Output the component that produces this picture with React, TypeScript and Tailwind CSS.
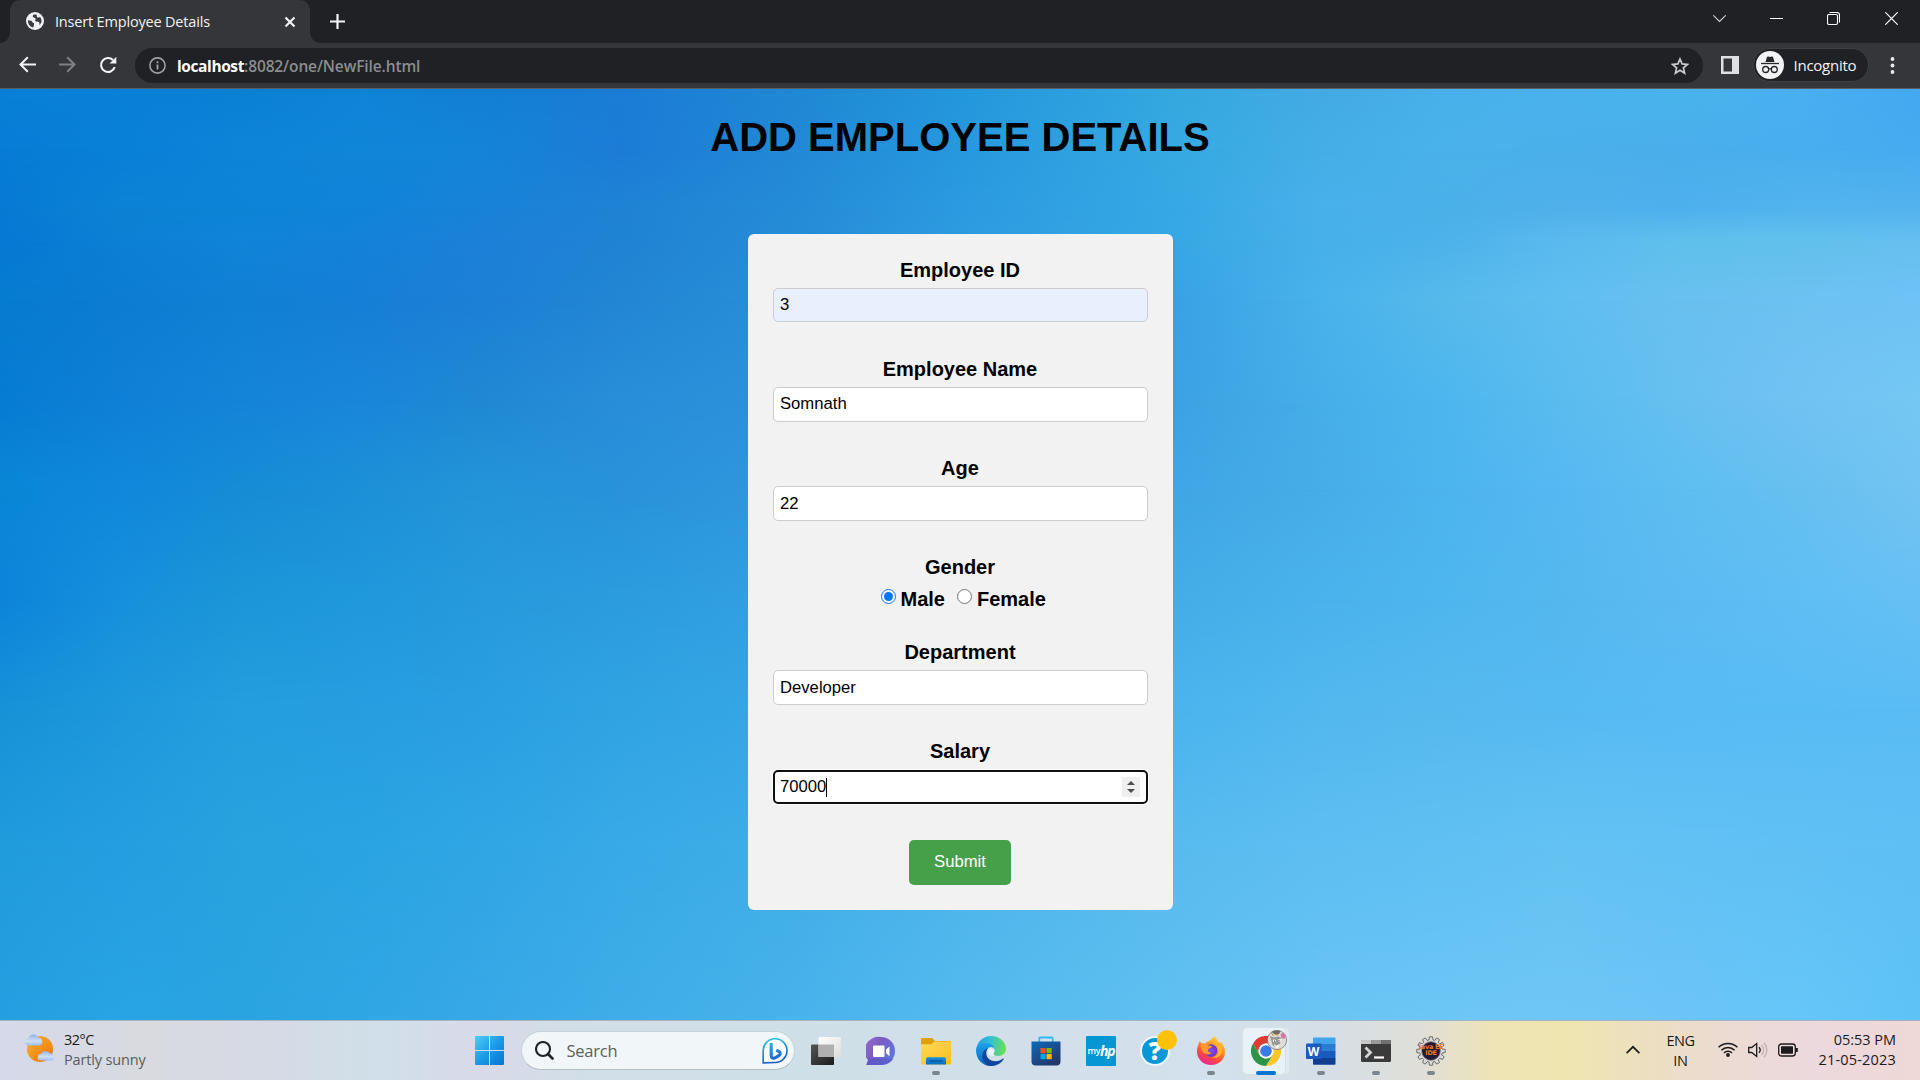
import React from "react";

const UI = "font-['Open_Sans','Noto_Sans',sans-serif]";

const stops = [0, 120, 240, 360, 480, 620, 800, 960, 1173, 1320, 1440, 1560, 1680, 1800, 1920];
const mesh: { y: number; c: string[] }[] = [
  { y: 0, c: ["#0880d8", "#0a80d8", "#0a80d4", "#0f84d8", "#127fd4", "#1b7dd6", "#1f88d4", "#2397dc", "#34a8e0", "#43aae4", "#48b0ea", "#4ab2ee", "#48b4ec", "#4ab0f2", "#44a8f0"] },
  { y: 60, c: ["#077cd6", "#0880d8", "#0e84d8", "#1086d8", "#1484d8", "#1c7cd6", "#2289d7", "#2798de", "#36a9e2", "#44aee6", "#4ab2ea", "#4ab0ea", "#4aaeec", "#48aeee", "#46acf0"] },
  { y: 120, c: ["#067ad4", "#0c82d4", "#0c84d6", "#1084d8", "#1882d8", "#1f83d4", "#248cd8", "#2c9ae0", "#36a8e4", "#48b0ec", "#4ab0e8", "#50b0ea", "#4eb0ee", "#52b4ee", "#54b2ee"] },
  { y: 152, c: ["#0579d4", "#0c80d4", "#1084d8", "#1482d8", "#1c80d8", "#2083d4", "#268dd8", "#2e9ce0", "#37a8e4", "#46b0ea", "#4cb2ea", "#5abaee", "#60c0ec", "#62c0ec", "#66c0f0"] },
  { y: 210, c: ["#067cd0", "#0c7cd2", "#1080d4", "#167ed6", "#1c80d6", "#2286d4", "#2890da", "#309fe2", "#38a2e4", "#48b2ec", "#56baea", "#60bef0", "#68c0f0", "#6cc2f2", "#6ec2f6"] },
  { y: 310, c: ["#067cd2", "#0f80d6", "#1484d8", "#1a86da", "#1f88d4", "#288eda", "#2c92da", "#309ae0", "#3ca2e2", "#46aeea", "#4cb6ee", "#5abcee", "#66c0f0", "#72c2f4", "#74c8f2"] },
  { y: 400, c: ["#0a86d6", "#1088dc", "#168cd6", "#1c90d8", "#2494d8", "#2892da", "#3098de", "#36a0e2", "#40a6e6", "#46ade8", "#4cb4ee", "#56b8f2", "#5ebef0", "#66c0f0", "#72c4f2"] },
  { y: 510, c: ["#0c84da", "#1690dc", "#1c96d8", "#2098dc", "#269adc", "#2c9cde", "#34a0e2", "#3ca6e6", "#43ade8", "#4ab2ec", "#4eb6ee", "#54b8ee", "#5cbaf2", "#60bef4", "#66c0f4"] },
  { y: 620, c: ["#1692d8", "#1e98dc", "#249ede", "#269ee0", "#2a9fe2", "#30a4e2", "#38a6e6", "#40acea", "#4ab4ee", "#52b8ee", "#56b9ee", "#56baf2", "#58bbf4", "#58bcf4", "#5abcf4"] },
  { y: 760, c: ["#209cdc", "#249ee0", "#28a3de", "#2aa4e2", "#30a6e4", "#38aae6", "#40aee8", "#4cb4ea", "#58bbee", "#5ebef2", "#60c0f2", "#64c2f2", "#62c1f4", "#60c0f4", "#5ebff4"] },
  { y: 932, c: ["#259ee0", "#28a4e4", "#2aa4e0", "#30a6e4", "#38a8e6", "#3fade8", "#48b2ec", "#54baee", "#60c0f0", "#6ac4f4", "#6cc6f6", "#6ec6f6", "#6cc4f6", "#66c6f8", "#5ec2f6"] },
];

function Wallpaper() {
  return (
    <div className="absolute inset-0 overflow-hidden">
      {mesh.map((row, i) => {
        const mask =
          i === 0 ? undefined : `linear-gradient(to bottom, transparent ${mesh[i - 1].y}px, black ${row.y}px)`;
        return (
          <div
            key={row.y}
            className="absolute inset-0"
            style={{
              backgroundImage: `linear-gradient(to right, ${row.c.map((c, k) => `${c} ${stops[k]}px`).join(", ")})`,
              maskImage: mask,
            }}
          />
        );
      })}
    </div>
  );
}

function TabStrip() {
  return (
    <div className="flex h-[43px] bg-[#202124]">
      <div className="relative ml-[10px] flex h-[43px] w-[300px] items-center rounded-t-[10px] bg-[#35363a]">
        <span className="absolute bottom-0 -left-[10px] h-[10px] w-[10px] bg-[radial-gradient(circle_at_0_0,#202124_9.5px,#35363a_10px)]" />
        <span className="absolute -right-[10px] bottom-0 h-[10px] w-[10px] bg-[radial-gradient(circle_at_100%_0,#202124_9.5px,#35363a_10px)]" />
        <svg className="mt-[-1px] ml-4 h-[18px] w-[18px]" viewBox="0 0 18 18">
          <circle cx="9" cy="9" r="9" fill="#eff1f3" />
          <path d="M2 8.200c1.200 0 2.500.2 3.600.9.800.5.500 1.500 1.500 1.700.9.200 1.200.8.900 1.700L7.300 15.600C4.200 15 2 12.300 2 9zM8 2.500c-1 .8-1.800 1.600-.9 2.600.8.900 2.100.4 2.500 1.600.3 1-.9 1.500-.3 2.400.7 1 2.700.3 3.700 1.200.8.700.4 1.700.3 2.600 1.200-1 2.200-2.400 2.200-4 0-1.500-.6-3-1.600-4.200-.4.800-1.100 1.100-2 .8-1.200-.5-1.400-1.500-1-2.600-1-.5-2-.6-2.900-.4z" fill="#3a3b40" />
        </svg>
        <span className={`${UI} ml-[11px] w-[216px] text-[14.5px] leading-5 tracking-[-0.18px] whitespace-nowrap text-[#f1f3f4]`}>
          Insert Employee Details
        </span>
        <svg className="ml-[13px] h-3 w-3" viewBox="0 0 12 12" stroke="#f1f3f4" strokeWidth="2.200">
          <path d="M1.500 1.500l9 9M10.500 1.500l-9 9" />
        </svg>
      </div>
      <svg className="mt-[14px] ml-[20px] h-[15px] w-[15px]" viewBox="0 0 15 15" stroke="#f1f3f4" strokeWidth="2.200">
        <path d="M7.500 0v15M0 7.500h15" />
      </svg>
      <div className="mt-[12px] ml-auto flex h-[13px] items-center">
        <svg className="mr-[44px] h-[13px] w-[13px]" viewBox="0 0 13 13" fill="none" stroke="#d5d6d8" strokeWidth="1.100">
          <path d="M.3 3.300l6.200 6.200 6.200-6.200" />
        </svg>
        <svg className="mr-[44px] h-[13px] w-[13px]" viewBox="0 0 13 13" stroke="#fff" strokeWidth="1">
          <path d="M0 6.500h13" />
        </svg>
        <svg className="mr-[45px] h-[13px] w-[13px]" viewBox="0 0 13 13" fill="none" stroke="#fff" strokeWidth="1.100">
          <rect x=".5" y="2.500" width="10" height="10" rx="1.500" />
          <path d="M2.500.5h7.500a2.500 2.500 0 0 1 2.500 2.500v7.500" />
        </svg>
        <svg className="mr-[22px] h-[13px] w-[13px]" viewBox="0 0 13 13" stroke="#fff" strokeWidth="1.200">
          <path d="M.3.3l12.400 12.400M12.700.3L.3 12.700" />
        </svg>
      </div>
    </div>
  );
}

function Toolbar() {
  return (
    <div className="flex h-[46px] border-b border-[#5b5d61] bg-[#35363a]">
      <svg className="mt-[13px] ml-[19px] h-[17px] w-[17px]" viewBox="0 0 17 17" fill="none" stroke="#f1f3f4" strokeWidth="2">
        <path d="M17 8.500H2M8.800 1.200L1.500 8.500l7.300 7.300" />
      </svg>
      <svg className="mt-[13px] ml-[23px] h-[17px] w-[17px]" viewBox="0 0 17 17" fill="none" stroke="#7e8084" strokeWidth="2">
        <path d="M0 8.500h15M8.200 1.200l7.300 7.300-7.300 7.300" />
      </svg>
      <svg className="mt-[13px] ml-[23px] h-[18px] w-[18px]" viewBox="0 0 18 18" fill="none" stroke="#f1f3f4" strokeWidth="2.100">
        <path d="M15.700 11.200A7 7 0 1 1 14 4" />
        <path d="M17.300.8v6.700h-6.700z" fill="#f1f3f4" stroke="none" />
      </svg>
      <div className="mt-[5px] ml-[18px] flex h-[35px] w-[1568px] items-center rounded-full bg-[#202124]">
        <svg className="ml-[14px] h-[17px] w-[17px]" viewBox="0 0 17 17" fill="none" stroke="#9aa0a6">
          <circle cx="8.500" cy="8.500" r="7.600" strokeWidth="1.600" />
          <path d="M8.500 7.500v5M8.500 4.200v2" strokeWidth="1.900" />
        </svg>
        <span className={`${UI} ml-[11px] mt-px text-[15.500px] leading-6 font-semibold tracking-[-0.12px] whitespace-nowrap text-[#8b8d90]`}>
          <span className="font-bold tracking-[-0.4px] text-white">localhost</span>:8082/one/NewFile.html
        </span>
        <svg className="mr-[14px] ml-auto h-[18px] w-[18px]" viewBox="0 0 18 18" fill="none" stroke="#c9cbce" strokeWidth="1.700">
          <path d="M9 2l2.100 4.900 5.300.5-4 3.500 1.200 5.200L9 13.300l-4.600 2.800 1.200-5.200-4-3.500 5.300-.5z" />
        </svg>
      </div>
      <svg className="mt-[13px] ml-[18px] h-[18px] w-[18px]" viewBox="0 0 18 18">
        <path d="M0 0h18v18H0zM2.500 2.500v13H11v-13z" fill="#dfe0e4" fillRule="evenodd" />
      </svg>
      <div className="mt-[5px] ml-[14px] flex h-[34px] w-[116px] items-center rounded-full border border-[#3e3f43] bg-[#202124]">
        <svg className="ml-[2px] h-7 w-7 shrink-0" viewBox="0 0 28 28">
          <circle cx="14" cy="14" r="14" fill="#f1f3f4" />
          <path d="M9.500 11l1.300-4.600c.2-.7.800-1 1.500-.8.600.2 1.100.3 1.700.3s1.100-.1 1.700-.3c.7-.2 1.300.1 1.500.8L18.500 11z" fill="#27282c" />
          <path d="M5 12.500h18" stroke="#27282c" strokeWidth="1.300" />
          <g fill="none" stroke="#27282c" strokeWidth="1.300">
            <circle cx="9.700" cy="18.500" r="3" />
            <circle cx="18.300" cy="18.500" r="3" />
            <path d="M12.700 18c.8-.5 1.800-.5 2.600 0" />
          </g>
        </svg>
        <span className={`${UI} ml-[9.500px] text-[15px] leading-5 tracking-[-0.25px] text-[#f1f3f4]`}>Incognito</span>
      </div>
      <svg className="mt-[14px] ml-[21px] h-[17px] w-[5px]" viewBox="0 0 5 17" fill="#e8eaed">
        <circle cx="2.500" cy="2" r="1.900" />
        <circle cx="2.500" cy="8.500" r="1.900" />
        <circle cx="2.500" cy="15" r="1.900" />
      </svg>
    </div>
  );
}

function Field({ label, value, box }: { label: string; value: string; box: string }) {
  return (
    <div className="mb-[1px] h-[98px]">
      <div className="mb-[6px] text-center text-[20px] leading-6 font-bold">{label}</div>
      <div className={`rounded-[5px] border border-[#ccc] pl-[6.500px] text-[16.667px] ${box}`}>{value}</div>
    </div>
  );
}

function EmployeeForm() {
  return (
    <div className="relative mx-auto mt-[72px] h-[676px] w-[425px] rounded-[6px] bg-[#f2f2f2] px-[25px] pt-6 text-black">
      <Field label="Employee ID" value="3" box="h-[34px] bg-[#e8f0fe] leading-[31px]" />
      <Field label="Employee Name" value="Somnath" box="h-[35px] bg-white leading-[31px]" />
      <Field label="Age" value="22" box="h-[35px] bg-white leading-[33px]" />
      <div className="mb-[29px]">
        <div className="mb-2 text-center text-[20px] leading-6 font-bold">Gender</div>
        <div className="flex pl-[108px] text-[20px] leading-6 font-bold">
          <span className="mt-[2px] flex h-[15px] w-[15px] items-center justify-center rounded-full border-[1.500px] border-[#0075ff] bg-white">
            <span className="h-[9px] w-[9px] rounded-full bg-[#0075ff]" />
          </span>
          <span className="ml-[5px] w-[43px]">Male</span>
          <span className="mt-[2px] ml-[13px] h-[15px] w-[15px] rounded-full border border-[#767676] bg-white" />
          <span className="ml-[5.500px]">Female</span>
        </div>
      </div>
      <Field label="Department" value="Developer" box="h-[35px] bg-white leading-[33px]" />
      <div>
        <div className="mb-[7px] text-center text-[20px] leading-6 font-bold">Salary</div>
        <div className="flex h-[34px] items-center rounded-[5px] border-2 border-[#101010] bg-white pr-[6px] pl-[5.500px] text-[16.667px] leading-[28px] shadow-[0_0_0_1px_#fff]">
          <span>70000</span>
          <span className="h-[19px] w-px bg-black" />
          <span className="ml-auto flex h-[20px] w-[18px] flex-col items-center justify-center gap-[4px] bg-[#efefef]">
            <svg className="h-1 w-2" viewBox="0 0 8 4" fill="#4d4d4d"><path d="M0 4l4-4 4 4z" /></svg>
            <svg className="h-1 w-2" viewBox="0 0 8 4" fill="#4d4d4d"><path d="M0 0l4 4 4-4z" /></svg>
          </span>
        </div>
      </div>
      <button className="mx-auto mt-9 block h-[45px] w-[102px] rounded-[5px] bg-[#45a049] pb-[2px] text-[16.667px] text-white">
        Submit
      </button>
    </div>
  );
}

function Slot({ children, running }: { children: React.ReactNode; running?: boolean }) {
  return (
    <div className="relative flex h-[59px] w-[55px] items-center justify-center">
      {children}
      {running && <span className="absolute bottom-[5px] left-[23.500px] h-1 w-2 rounded-full bg-[#7b868d]" />}
    </div>
  );
}

function TaskView() {
  return (
    <svg className="h-[30px] w-[30px]" viewBox="0 0 30 30">
      <defs>
        <linearGradient id="tvDark" x1="0" y1="0" x2="1" y2="1"><stop stopColor="#555" /><stop offset="1" stopColor="#1c1c1c" /></linearGradient>
        <linearGradient id="tvLight" x1="0" y1="0" x2="1" y2="1"><stop stopColor="#fff" /><stop offset="1" stopColor="#dcdcdc" /></linearGradient>
      </defs>
      <rect x="0" y="8.500" width="23" height="20.500" rx="1" fill="url(#tvDark)" />
      <rect x="7.500" y="1" width="22.500" height="20" rx="1" fill="url(#tvLight)" />
      <path d="M7.500 8.500H23V21H7.500z" fill="#b0b0b0" />
    </svg>
  );
}

function Chat() {
  return (
    <svg className="h-[30px] w-[30px]" viewBox="0 0 30 30">
      <defs>
        <linearGradient id="chat" x1="0" y1="0" x2="1" y2=".6"><stop stopColor="#9a6acb" /><stop offset=".5" stopColor="#7a5cc4" /><stop offset="1" stopColor="#5a78dc" /></linearGradient>
      </defs>
      <path d="M15 1a14 14 0 1 1 0 28H.8c-.5 0-.6-.4-.3-.8l1.700-4A14 14 0 0 1 15 1z" fill="url(#chat)" />
      <path d="M2.500 22.500h25C25 27 20 29 15 29H.8l-.3-.8z" fill="#5654c8" opacity=".6" />
      <rect x="7" y="9.500" width="11.500" height="11.500" rx="1.200" fill="#fff" />
      <path d="M20 13.500l3.500-3v9.700l-3.500-3z" fill="#fff" />
    </svg>
  );
}

function Folder() {
  return (
    <svg className="h-[30px] w-[30px]" viewBox="0 0 30 30">
      <defs>
        <linearGradient id="fold" x1="0" y1="0" x2="1" y2="1"><stop stopColor="#ffdc5e" /><stop offset="1" stopColor="#fcba1c" /></linearGradient>
        <linearGradient id="foldB" x1="0" y1="0" x2="0" y2="1"><stop stopColor="#1490df" /><stop offset="1" stopColor="#0b6ec0" /></linearGradient>
      </defs>
      <path d="M0 3.500C0 2.700.5 2 1.300 2h9.200c.6 0 1 .2 1.400.7L14 5h14.700c.8 0 1.300.5 1.300 1.200V10H0z" fill="#e09f0c" />
      <path d="M0 8.200h10.500L13.500 5.500H30v22.200c0 .5-.4.800-.8.800H.8c-.4 0-.8-.3-.8-.8z" fill="url(#fold)" />
      <path d="M5 28.500v-5.200c0-1.200.8-2 2-2h16c1.200 0 2 .8 2 2v5.200z" fill="url(#foldB)" />
      <path d="M8.500 25h13" stroke="#0b4f94" strokeWidth="1.300" />
    </svg>
  );
}

function Edge() {
  return (
    <svg className="h-[30px] w-[30px]" viewBox="0 0 30 30">
      <defs>
        <linearGradient id="edgeTop" x1="0" y1=".4" x2="1" y2=".5"><stop stopColor="#1b9de2" /><stop offset=".45" stopColor="#34bfd8" /><stop offset="1" stopColor="#6be24a" /></linearGradient>
        <linearGradient id="edgeMid" x1="0" y1="0" x2="0" y2="1"><stop stopColor="#1ca2ea" /><stop offset="1" stopColor="#0c62bc" /></linearGradient>
      </defs>
      <path d="M.3 13C1.300 5.500 7.500 0 15 0c8.500 0 15 6 15 12.800 0 4.500-3.500 7.200-7.600 7.200-3.300 0-5.200-1-5.200-2.200 0-.8 1.300-1.400 1.300-3.600 0-2.600-2.600-5.600-7.500-5.600-5 0-9 2.200-10.700 4.400z" fill="url(#edgeTop)" />
      <path d="M0 14.500c0-4.200 4.500-7.400 9.800-7.400 5.500 0 8.700 3.600 8.700 7 0-1.600-1.600-3-3.500-3-3 0-5.300 3.200-5.300 6.800 0 5.800 4.600 10.300 10.400 10.300-1.600 1.200-3.500 1.800-5.600 1.800C6.500 30 0 23 0 14.500z" fill="url(#edgeMid)" />
      <path d="M12.200 12c-1.500 1.500-1.900 3.400-1.900 5 0 5.700 4.800 8.200 9 8.200 3.500 0 5.800-1.400 7.500-2.500.8-.5 1.200 0 .9.500A15 15 0 0 1 14.800 30c-5.600-1-8.600-5.400-8.600-10 0-3.600 2.400-7 6-8z" fill="#10479a" />
      <path d="M13.500 12.600c2-.6 4.500.2 5 2 .3 1.600-1 2.500-1 3.500 0 .7.500 1.200 1.300 1.600-3.500 1-6.800-1-6.800-4 0-1.200.5-2.500 1.500-3.100z" fill="#eaf4fa" opacity=".9" />
    </svg>
  );
}

function Store() {
  return (
    <svg className="h-[30px] w-[30px]" viewBox="0 0 30 30">
      <defs>
        <linearGradient id="store" x1="0" y1="0" x2=".7" y2="1"><stop stopColor="#0e69b8" /><stop offset="1" stopColor="#24366a" /></linearGradient>
      </defs>
      <path d="M8.300 7V2.500c0-.6.400-1 1-1h11.400c.6 0 1 .4 1 1V7" fill="none" stroke="#29bdf2" strokeWidth="1.800" />
      <path d="M.5 5.500h29v20c0 2.500-1.500 4-4 4h-21c-2.500 0-4-1.500-4-4z" fill="url(#store)" />
      <path d="M9.500 12h5.200v5.200H9.500z" fill="#f25022" />
      <path d="M15.500 12h5.200v5.200h-5.200z" fill="#7fba00" />
      <path d="M9.500 18h5.200v5.200H9.500z" fill="#00a4ef" />
      <path d="M15.500 18h5.200v5.200h-5.200z" fill="#ffb900" />
    </svg>
  );
}

function Help() {
  return (
    <div className="relative h-[30px] w-[30px]">
      <div className="-ml-px flex h-[30px] w-[30px] items-center justify-center rounded-full border-2 border-[#eef7fb] bg-[#0a97d8] font-['Open_Sans',sans-serif] text-[25px] leading-none font-extrabold text-white">
        ?
      </div>
      <span className="absolute -top-[6px] left-[16px] h-5 w-5 rounded-full bg-[#ffc20a]" />
    </div>
  );
}

function Firefox() {
  return (
    <svg className="h-[30px] w-[30px]" viewBox="0 0 30 30">
      <defs>
        <linearGradient id="ff" x1=".8" y1="0" x2=".3" y2="1"><stop stopColor="#ffe23c" /><stop offset=".35" stopColor="#ff9a26" /><stop offset=".7" stopColor="#ff4a42" /><stop offset="1" stopColor="#e8249c" /></linearGradient>
        <radialGradient id="ffP"><stop stopColor="#8a4cf0" /><stop offset="1" stopColor="#6a35c4" /></radialGradient>
      </defs>
      <path d="M18.500 0c1.500 1.500 2 4 4.500 6l1.300 1.300c.2-.8.200-1.300.2-1.800 3.200 3 4.500 7 4.500 10.500C29 23.500 23 29 15.200 29 7 29 1 23 1 15.500c0-3 .6-5.300 1.500-7 .2-1.500.8-2.500 1.600-3.200.2 1 .7 1.700 1.300 2.200 1.500-.3 2.600-.1 3.600.3 1-1.500 2.500-2.500 4-2.800 1.500-.3 2-2 5.500-5z" fill="url(#ff)" />
      <circle cx="15" cy="14.500" r="6.300" fill="url(#ffP)" />
      <path d="M4.500 9c3-1.500 6-1 7.800.6 1.500.1 3.300.3 3.600.9-.6 1.700-2.900 1.700-3.700 2.800-.6 1 .2 3.300 3.200 3.600-2 2.100-5.200 2-7 .2C5.500 15.500 5 12 4.500 9z" fill="#ff9a2c" />
      <path d="M16 7c3.500.5 6.500 3.500 6.500 7.500s-3 6.800-7 6.800c4 1.700 9.500-.8 10.300-5.800.5-4-1.300-7-4-9.500-1.500-1-3-1-5.800 1z" fill="#ffb52e" />
    </svg>
  );
}

function Chrome() {
  return (
    <div className="relative flex h-12 w-12 justify-start">
      <div className="h-12 w-12 rounded-[5px] border border-[#d5e0e6] bg-[#dfeaf0]" />
      <div className="absolute top-0 left-0 h-12 w-[44px] rounded-[5px] border border-[#d5e0e7] bg-[#e9f2f7]" />
      <svg className="absolute top-[9px] left-[9px] h-[30px] w-[30px]" viewBox="0 0 30 30">
        <circle cx="15" cy="15" r="15" fill="#fff" />
        <path d="M2 7.500A15 15 0 0 1 28 7.500H15A7.500 7.500 0 0 0 8.500 18.700z" fill="#df3b32" />
        <path d="M28 7.500A15 15 0 0 1 15 30l6.500-11.200A7.500 7.500 0 0 0 15 7.500z" fill="#fcc52a" />
        <path d="M2 7.500A15 15 0 0 0 15 30l6.500-11.200a7.500 7.500 0 0 1-13 0z" fill="#2d9347" />
        <circle cx="15" cy="15" r="7.500" fill="#fff" />
        <circle cx="15" cy="15" r="5.800" fill="#397ce6" />
      </svg>
      <svg className="absolute top-[3px] left-[25px] h-5 w-5" viewBox="0 0 20 20">
        <circle cx="10" cy="10" r="9.600" fill="#e0ddd9" stroke="#777" strokeWidth=".8" />
        <path d="M4.500 1.800l3.500 3 4-.5 1.500-3-1-.8H8z" fill="#6f6b66" />
        <path d="M3 6l4 1.500 3-1 4 1-1 6-3.500 4.500-4-3z" fill="#989898" />
        <path d="M6 9.500l3 .5-1 2.500-2-1zM11 9.500l3-.5-.5 2.500-2 .5z" fill="#fff" />
        <path d="M13.500 4l3-1 2 3-1 3-3-1z" fill="#dc6ea8" />
        <path d="M6.500 14l3 1.500 3-1.500-1.500 4H9z" fill="#f7f7f7" />
        <path d="M7.500 10.500v1.200M12 10.200v1.200" stroke="#333" />
        <path d="M4.500 3l2 3M8 4l3 1" stroke="#c58a2d" />
      </svg>
      <span className="absolute bottom-0 left-[14px] h-1 w-5 rounded-full bg-[#0a74d1]" />
    </div>
  );
}

function Word() {
  return (
    <div className="relative h-[30px] w-[30px]">
      <svg className="h-[30px] w-[30px]" viewBox="0 0 30 30">
        <path d="M7 1.500h21.500c.5 0 1 .4 1 1V8H7z" fill="#41a5ee" />
        <path d="M7 8h22.500v7H7z" fill="#2b7cd3" />
        <path d="M7 15h22.500v7H7z" fill="#185abd" />
        <path d="M7 22h22.500v5.700c0 .6-.4 1-1 1H8c-.6 0-1-.4-1-1z" fill="#103f91" />
        <rect x="0" y="7.500" width="15.500" height="15.500" rx="1" fill="#1b5cbe" />
      </svg>
      <span className="absolute top-[8px] left-0 w-[15px] text-center font-['Open_Sans',sans-serif] text-[12px] leading-[15px] font-bold text-white">W</span>
    </div>
  );
}

function Terminal() {
  return (
    <svg className="h-[30px] w-[30px]" viewBox="0 0 30 30">
      <rect x="0" y="4" width="30" height="22" rx="1.200" fill="#3b3b3b" />
      <path d="M1 4h9.500v4H0V5c0-.6.400-1 1-1z" fill="#c7c7c7" />
      <path d="M10.500 4h10v4h-10z" fill="#9a9a9a" />
      <path d="M20.500 4H29c.6 0 1 .4 1 1v3h-9.500z" fill="#707070" />
      <path d="M4.500 11.500l5 5-5 5" fill="none" stroke="#d4d4d4" strokeWidth="2.800" />
      <path d="M13 21.500h10" stroke="#fff" strokeWidth="2.200" />
    </svg>
  );
}

const gear = Array.from({ length: 12 }, (_, i) => {
  const at = (r: number, deg: number) => {
    const a = ((i * 30 + deg) * Math.PI) / 180;
    return `${(15 + r * Math.sin(a)).toFixed(2)},${(15 - r * Math.cos(a)).toFixed(2)}`;
  };
  return [at(11.3, -10), at(14.3, -6.5), at(14.3, 6.5), at(11.3, 10)].join(" ");
}).join(" ");

function JavaIde() {
  return (
    <div className="relative h-[30px] w-[30px]">
      <svg className="h-[30px] w-[30px]" viewBox="0 0 30 30">
        <polygon points={gear} fill="#dadada" stroke="#6c6c6c" strokeWidth="1" strokeLinejoin="round" />
        <circle cx="15" cy="15" r="9.300" fill="#231a35" stroke="#777" strokeWidth=".8" />
      </svg>
      <span className="absolute top-[8px] -left-[1px] w-8 text-center font-['DejaVu_Sans',sans-serif] text-[6.500px] leading-[6.500px] font-bold tracking-[-0.3px] whitespace-pre text-[#e87d22]">
        {"Java EE\nIDE"}
      </span>
    </div>
  );
}

function Taskbar() {
  return (
    <div
      className={`${UI} flex h-[60px] border-t border-[#a4b4c0] bg-[linear-gradient(to_right,#d5daea_0px,#d8dadf_140px,#d6dae5_260px,#d0dfe9_380px,#d8dae8_480px,#d0dfe8_600px,#cfdfe8_840px,#d3dfea_1080px,#d2e1ed_1200px,#d6dfe6_1330px,#dfdfd8_1420px,#efe4b4_1500px,#efe5b0_1570px,#ecdfc2_1650px,#ecdbd2_1720px,#ecd9de_1810px,#efd8d5_1920px)]`}
    >
      <svg className="mt-[12px] ml-[25px] h-[30px] w-[30px]" viewBox="0 0 30 30">
        <defs>
          <linearGradient id="sun" x1="0" y1="0" x2="1" y2="1"><stop stopColor="#f5b62c" /><stop offset="1" stopColor="#f0700e" /></linearGradient>
          <linearGradient id="cloud" x1="0" y1="0" x2="0" y2="1"><stop stopColor="#8fb2ea" /><stop offset=".6" stopColor="#cfe0fa" /><stop offset="1" stopColor="#9ebcf0" /></linearGradient>
        </defs>
        <circle cx="15" cy="16" r="13" fill="url(#sun)" />
        <path d="M3.500 12.500a3.500 3.500 0 0 1 0-7 5.200 5.200 0 0 1 9.800-.8 4 4 0 0 1 1.200 7.800z" fill="url(#cloud)" />
        <path d="M16 27.500a3.200 3.200 0 0 1 0-6.400 5 5 0 0 1 9-.5 3.500 3.500 0 0 1 1.500 6.900z" fill="url(#cloud)" />
      </svg>
      <div className="mt-[9px] ml-[9px] w-[402px] text-[14.500px] leading-5 whitespace-nowrap">
        <div className="tracking-[-0.5px] text-[#1b1b1b]">32°C</div>
        <div className="tracking-[-0.15px] text-[#5a5c60]">Partly sunny</div>
      </div>
      <svg className="mt-[15px] ml-[9px] h-[29px] w-[29px]" viewBox="0 0 29 29">
        <defs>
          <linearGradient id="win" x1="0" y1="0" x2="1" y2="1"><stop stopColor="#50cdf8" /><stop offset=".5" stopColor="#1b9be8" /><stop offset="1" stopColor="#0873d0" /></linearGradient>
        </defs>
        <path d="M1 0h13v14H0V1a1 1 0 0 1 1-1zM15 0h13a1 1 0 0 1 1 1v13H15zM0 15h14v14H1a1 1 0 0 1-1-1zM15 15h14v13a1 1 0 0 1-1 1H15z" fill="url(#win)" />
      </svg>
      <div className="mt-[10px] ml-[17px] flex h-[39px] w-[274px] items-center rounded-full border border-[#c4d2da] border-b-[#b3bdc5] bg-[#f1f6f9]">
        <svg className="ml-[13px] h-[19px] w-[19px]" viewBox="0 0 19 19" fill="none" stroke="#232323" strokeWidth="2.100" strokeLinecap="round">
          <circle cx="8" cy="8" r="7" />
          <path d="M13 13l4.500 4.500" strokeWidth="2.600" />
        </svg>
        <span className="ml-[12.500px] text-[16.500px] leading-6 tracking-[-0.25px] text-[#5c5e61]">Search</span>
        <svg className="mr-[6px] ml-auto h-[26px] w-[26px]" viewBox="0 0 26 26">
          <defs>
            <linearGradient id="bing" gradientUnits="userSpaceOnUse" x1="6" y1="0" x2="14" y2="26"><stop stopColor="#2fcbea" /><stop offset="1" stopColor="#1b50c8" /></linearGradient>
          </defs>
          <path d="M1.200 24.800V13A11.900 11.900 0 1 1 13 24.500z" fill="#fff" stroke="url(#bing)" strokeWidth="1.700" />
          <path d="M9.200 5v12.500c0 2.800 2.300 3.300 4.300 2.200l3.300-2c2.200-1.500 1.800-3.700-.3-4.500l-2.300-1" fill="none" stroke="url(#bing)" strokeWidth="3.200" strokeLinejoin="round" />
        </svg>
      </div>
      <div className="ml-[3.500px] flex">
        <Slot><TaskView /></Slot>
        <Slot><Chat /></Slot>
        <Slot running><Folder /></Slot>
        <Slot><Edge /></Slot>
        <Slot><Store /></Slot>
        <Slot>
          <div className="flex h-[30px] w-[30px] items-center justify-center rounded-[1px] bg-[#0596d5] text-white">
            <span className="text-[9px] leading-[14px] font-semibold tracking-[-0.5px]">my</span>
            <span className="text-[14px] leading-[14px] font-bold tracking-[-1.200px] italic">hp</span>
          </div>
        </Slot>
        <Slot><Help /></Slot>
        <Slot running><Firefox /></Slot>
        <Slot><Chrome /></Slot>
        <Slot running><Word /></Slot>
        <Slot running><Terminal /></Slot>
        <Slot running><JavaIde /></Slot>
      </div>
      <div className="mr-6 ml-auto flex text-[14.500px] leading-5 text-[#1b1b1b]">
        <svg className="mt-[24px] h-[10px] w-[14px]" viewBox="0 0 14 10" fill="none" stroke="#1b1b1b" strokeWidth="1.700">
          <path d="M.6 8.200L7 1.800l6.400 6.400" />
        </svg>
        <div className="mt-[10px] ml-[26px] w-[29px] text-center">
          <div className="tracking-[-0.5px]">ENG</div>
          <div className="tracking-[-0.3px]">IN</div>
        </div>
        <svg className="mt-[20px] ml-[23px] h-[18px] w-[20px]" viewBox="0 0 20 18" fill="none" stroke="#1b1b1b" strokeWidth="1.500">
          <path d="M.6 6.300a13.300 13.300 0 0 1 18.800 0M3.400 9.300a9.300 9.300 0 0 1 13.200 0M6 12a5.600 5.600 0 0 1 8 0" />
          <circle cx="10" cy="14" r="1.900" fill="#1b1b1b" stroke="none" />
        </svg>
        <svg className="mt-[20px] ml-[10px] h-[18px] w-[20px]" viewBox="0 0 20 18" fill="none" stroke="#1b1b1b" strokeWidth="1.300">
          <path d="M.7 6.500h3l5-4v13l-5-4h-3z" />
          <path d="M11 6.300a4 4 0 0 1 0 5.400" />
          <path d="M13.500 4a7 7 0 0 1 0 10M16 1.800a10.500 10.500 0 0 1 0 14.400" stroke="#bfb0ab" />
        </svg>
        <svg className="mt-[22px] ml-[10px] h-[14px] w-[20px]" viewBox="0 0 20 14" fill="none" stroke="#1b1b1b" strokeWidth="1.300">
          <rect x=".7" y="1" width="16.600" height="12" rx="2.800" />
          <rect x="3" y="3.300" width="12" height="7.400" rx=".8" fill="#1b1b1b" stroke="none" />
          <path d="M18.800 5v4" strokeWidth="2" />
        </svg>
        <div className="mt-[9px] ml-[20px] w-[78px] text-right whitespace-nowrap">
          <div className="tracking-[-0.04px]">05:53 PM</div>
          <div className="tracking-[0.18px]">21-05-2023</div>
        </div>
      </div>
    </div>
  );
}

export default function App() {
  return (
    <div className="flex h-[1080px] w-[1920px] flex-col overflow-hidden font-['Liberation_Sans',Arial,sans-serif]">
      <TabStrip />
      <Toolbar />
      <main className="relative flex-1">
        <Wallpaper />
        <h1 className="relative pt-[23px] text-center text-[40px] leading-[50px] font-bold text-black">
          ADD EMPLOYEE DETAILS
        </h1>
        <EmployeeForm />
      </main>
      <Taskbar />
    </div>
  );
}
